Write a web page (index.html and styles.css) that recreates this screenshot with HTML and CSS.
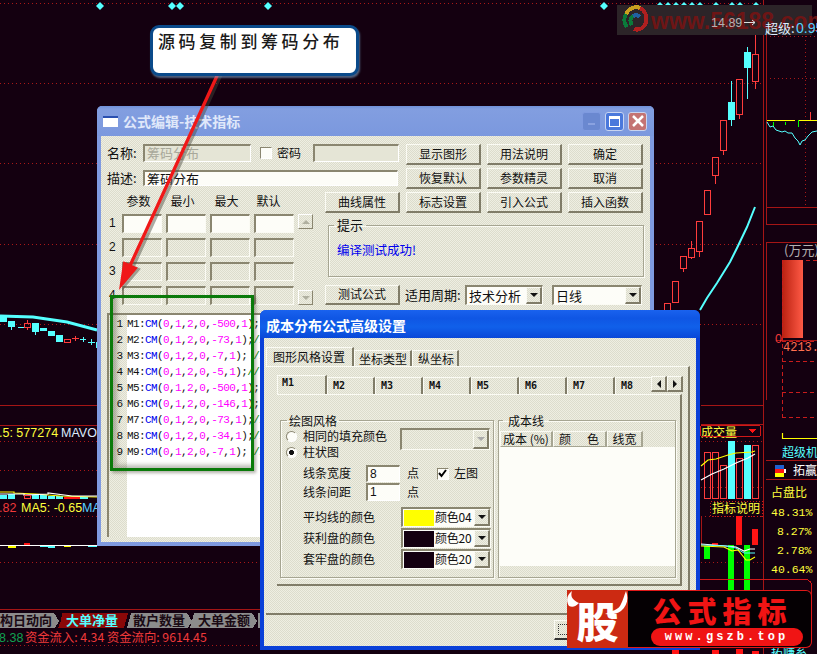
FILE: index.html
```html
<!DOCTYPE html>
<html lang="zh">
<head>
<meta charset="utf-8">
<title>成本分布公式高级设置</title>
<link rel="stylesheet" href="styles.css">
</head>
<body>
<main class="desktop">

<svg class="chart" width="817" height="654" viewBox="0 0 817 654" xmlns="http://www.w3.org/2000/svg">
  <!-- grid -->
  <g class="dot">
    <path d="M0 3.500H763M0 83.500H763M0 163.500H763M0 244.500H763M0 324.500H763M0 441.500H97M0 470.500H97M0 516.500H97M0 562.500H260M0 645.500H560"/>
    <path d="M766 36.500H817M766 78.500H817M805.500 36V205M701 441.500H763M701 516.500H763M701 487.500H763M701 562.500H763"/>
  </g>
  <g class="solid">
    <path d="M0 405.500H97M0 425.500H97M0 609.500H260M763.500 0V654M766.500 20V224M766 207.500H817M766 224.500H817M766 242.500H817M766.500 242V400M701 405.500H763M701 424.500H763M766 460.500H817M766 479.500H817M766 30.500H817M776 340.500H817"/>
  </g>
  <!-- diamonds -->
  <g class="gem">
    <path d="M100 2l4 4-4 4-4-4zM172 2l4 4-4 4-4-4zM180 2l4 4-4 4-4-4zM268 2l4 4-4 4-4-4zM604 2l4 4-4 4-4-4zM660 2l4 4-4 4-4-4zM668 2l4 4-4 4-4-4zM676 2l4 4-4 4-4-4zM684 2l4 4-4 4-4-4zM692 2l4 4-4 4-4-4zM700 2l4 4-4 4-4-4zM716 2l4 4-4 4-4-4zM732 2l4 4-4 4-4-4zM740 2l4 4-4 4-4-4zM756 2l4 4-4 4-4-4z"/>
  </g>
  <!-- candles main -->
  <g class="wick-dn"><path d="M747.500 47V99M731.500 81V126"/></g>
  <g class="wick-up"><path d="M755.500 23V54M755.500 81V89M739.500 115V119M723.500 151V155M715.500 176V184M699.500 251V257M691.500 241V248M691.500 257V259M683.500 269V272"/></g>
  <g class="up">
    <rect x="752.500" y="54.500" width="6" height="27"/>
    <rect x="736.500" y="79.500" width="6" height="35"/>
    <rect x="720.500" y="120.500" width="6" height="30"/>
    <rect x="712.500" y="157.500" width="6" height="18"/>
    <rect x="704.500" y="190.500" width="6" height="24"/>
    <rect x="696.500" y="221.500" width="6" height="30"/>
    <rect x="688.500" y="248.500" width="6" height="9"/>
    <rect x="680.500" y="256.500" width="6" height="12"/>
    <rect x="672.500" y="281.500" width="6" height="21"/>
    <rect x="664.500" y="303.500" width="6" height="12"/>
  </g>
  <g class="dn">
    <rect x="744" y="52" width="7" height="16"/>
    <rect x="728" y="102" width="7" height="18"/>
  </g>
  <polyline class="ma" points="755,207 747,227 737,248 730,262 717,283 707,298 700,310"/>

  <!-- candles left -->
  <polyline class="ma thick" points="0,316 33,317 67,322 97,330"/>
  <g class="dn">
    <rect x="0" y="315" width="7" height="7"/><rect x="8" y="321" width="7" height="6"/>
    <rect x="32" y="323" width="7" height="9"/><rect x="40" y="328" width="7" height="3"/>
    <rect x="48" y="331" width="7" height="5"/><rect x="56" y="335" width="7" height="7"/>
    <rect x="96" y="342" width="1" height="6"/>
  </g>
  <g class="wick-dn"><path d="M11.500 327V330M35.500 332V335M18 327.500H24M80 339.500H86M88 342.500H95M83 337V342M91 339V345"/></g>
  <g class="wick-up"><path d="M27.500 320V323M27.500 327V330M72 338.500H79M75.500 336V341"/></g>
  <g class="up"><rect x="24.500" y="323.500" width="6" height="4"/><rect x="64.500" y="339.500" width="6" height="3"/></g>

  <!-- volume rows left -->
  <g class="dn"><rect x="0" y="495" width="7" height="4"/><rect x="8" y="494" width="7" height="5"/><rect x="32" y="495" width="7" height="4"/><rect x="40" y="495" width="7" height="4"/><rect x="48" y="496" width="7" height="3"/><rect x="56" y="496" width="7" height="3"/><rect x="80" y="497" width="8" height="2"/></g>
  <rect class="fill-red" x="64" y="497" width="16" height="2"/>
  <polyline class="line-y" points="0,492 14,492 14,493 36,494 60,496 97,497"/>
  <polyline class="line-w" points="0,494 24,494 24,495 48,494 48,493 72,496 97,496"/>
  <g class="up"><rect x="24.500" y="495.500" width="6" height="3"/></g>
  <path class="line-w" d="M0 545.500H97"/>
  <rect class="fill-red" x="24" y="543" width="6" height="2"/>
  <rect class="fill-yel" x="8" y="546" width="8" height="2"/>
  <rect class="fill-yel" x="64" y="546" width="7" height="1"/>
  <rect class="fill-cy" x="40" y="546" width="8" height="1"/>
  <rect class="fill-cy" x="48" y="546" width="7" height="2"/>
  <rect class="fill-cy" x="88" y="546" width="9" height="1"/>

  <text class="t num yel" x="-1" y="437">.5: 577274</text>
  <text class="t num pale" x="61" y="437">MAVOL</text>
  <text class="t num red" x="-1" y="512">.82</text>
  <text class="t num yel" x="21" y="512">MA5: -0.65</text>
  <text class="t num cyan2" x="82" y="512">MA</text>

  <!-- bottom tabs -->
  <g class="tabs">
    <polygon class="tab" points="0,613 54,613 59,621 55,628 0,628"/>
    <polygon class="tab" points="131,613 187,613 192,621 188,628 127,628"/>
    <polygon class="tab" points="194,613 252,613 257,621 253,628 190,628"/>
    <polygon class="tab" points="258,613 262,613 262,628 258,628"/>
    <polygon class="tab on" points="62,613 128,613 124,628 58,628 61,621"/>
    <text class="tabt" x="0" y="625">构日动向</text>
    <text class="tabt cyan" x="66" y="625">大单净量</text>
    <text class="tabt" x="133" y="625">散户数量</text>
    <text class="tabt" x="198" y="625">大单金额</text>
  </g>
  <text class="t num green" x="-1" y="642">8.38</text>
  <text class="t cn status red" x="25" y="642">资金流入: 4.34 资金流向: 9614.45</text>

  <!-- top right panel -->
  <path class="line-y" d="M767 120.500H795M798 120.500H817"/>
  <path class="solid-br" d="M810.500 112V120"/>
  <path class="line-g" d="M773.500 122V127M785.500 122V125M798.500 120V127"/>
  <polyline class="thin-cy" points="767,122 770,127 773,126 776,130 779,131 782,132 785,131 788,133 792,133 795,138 798,141 800,145 802,141 805,140 808,136 812,132 817,131"/>
  <text class="t cn gray" x="784" y="255">(万元)</text>
  <defs>
    <linearGradient id="barfill" x1="0" x2="1" y1="0" y2="0">
      <stop offset="0" stop-color="#b82010"/><stop offset="1" stop-color="#ff5a46"/>
    </linearGradient>
  </defs>
  <rect x="782" y="260" width="21" height="78" fill="url(#barfill)"/>
  <path class="dash" d="M782.500 260V417M806 260.500H817M782 341.500H817M782 361.500H817M782 392.500H817M782 417.500H817"/>
  <text class="t num red" x="775" y="343">0</text>
  <text class="t mono sal" x="783" y="351">4213.8</text>
  <path class="line-y" d="M782.500 433V438.500H817"/>
  <text class="t cn cyan big" x="782" y="457">超级机</text>

  <!-- lower right indicators -->
  <text class="t cn yel big" x="701" y="437">成交量</text>
  <rect class="frame" x="700.500" y="425.500" width="60" height="11" rx="2"/>
  <polygon class="fill-red" points="749,429 756,429 752.500,433"/>
  <g class="up">
    <rect x="704.500" y="452.500" width="6" height="46"/>
    <rect x="712.500" y="452.500" width="6" height="46"/>
    <rect x="720.500" y="465.500" width="6" height="33"/>
    <rect x="736.500" y="458.500" width="6" height="40"/>
    <rect x="752.500" y="445.500" width="6" height="53"/>
  </g>
  <rect class="fill-cy" x="728" y="441" width="7" height="58"/>
  <rect class="fill-cy" x="744" y="445" width="7" height="54"/>
  <polyline class="line-y" points="701,466 708,460 716,459 728,455 736,453 752,452 755,451"/>
  <polyline class="line-w" points="701,480 712,474 724,469 736,463 748,458 755,454"/>
  <rect class="frame dotted" x="710.500" y="501.500" width="52" height="15"/>
  <text class="t cn yel big" x="712" y="513">指标说明</text>
  <path class="solid" d="M701.500 516V545"/>
  <rect class="fill-red" x="736" y="516" width="6" height="29"/>
  <rect class="fill-red" x="752" y="529" width="6" height="16"/>
  <rect class="fill-red" x="712" y="543" width="6" height="3"/>
  <rect class="fill-grn" x="704" y="546" width="6" height="13"/>
  <rect class="fill-grn" x="728" y="545" width="6" height="45"/>
  <rect class="fill-grn" x="744" y="545" width="6" height="45"/>
  <polyline class="line-w" points="701,544 726,546 736,547 744,551 750,549 755,549"/>
  <polyline class="thin-cy" points="701,545 726,546 736,548 744,553 750,553 755,553"/>
  <polyline class="line-y" points="701,546 724,547 732,551 738,550 746,560 750,560 755,557"/>
  <rect class="frame" x="662.500" y="579.500" width="149" height="40" rx="6"/>

  <!-- right info list -->
  <rect class="fill-blue" x="775" y="465" width="9" height="4"/>
  <rect class="fill-red" x="775" y="469" width="9" height="4"/>
  <rect class="fill-yel" x="775" y="473" width="9" height="4"/>
  <rect class="fill-white" x="784" y="469" width="2" height="4"/>
  <text class="t cn white big" x="793" y="475">拓赢</text>
  <text class="t cn yel big" x="771" y="497">占盘比</text>
  <text class="t mono yel pct" x="771" y="516">48.31% 起</text>
  <text class="t mono yel pct" x="777" y="535">8.27% 机</text>
  <text class="t mono yel pct" x="777" y="554">2.78% 中</text>
  <text class="t mono yel pct" x="771" y="573">40.64% 普</text>
  <g><rect class="fill-red" x="672" y="648" width="7" height="6"/><rect class="fill-red" x="712" y="650" width="7" height="4"/><rect class="fill-red" x="736" y="649" width="7" height="5"/><rect class="fill-red" x="752" y="651" width="7" height="3"/></g>
  <text class="t cn cyan big" x="771" y="657">拓赚系</text>

  <!-- watermark -->
  <rect class="wm" x="617" y="5" width="195" height="30"/>
  <g fill="none" stroke-width="4">
    <path d="M627 27a11 11 0 0 1-1-13" stroke="#0a7a3a"/>
    <path d="M626 14a11 11 0 0 1 14-6" stroke="#c8a020"/>
    <path d="M640 8a11 11 0 0 1 6 13 9 9 0 0 1-12 8" stroke="#b02020"/>
    <path d="M632 25a6 6 0 0 1 1-9" stroke="#0a7a3a"/>
    <path d="M633 16a6 6 0 0 1 7 1" stroke="#2060a0"/>
  </g>
  <text class="wmt" x="651" y="29">www.56188.com</text>
  <text class="t num gray" x="711" y="27">14.89</text>
  <path class="thin-w" d="M744 22.500H755M752 20l3 2.500-3 2.500"/>
  <text class="t cn pale" x="765" y="33">超级:</text>
  <text class="t num num-lg cyan2" x="796" y="33">0.95</text>
</svg>

<section class="win win-a">
  <header class="title-a">
    <span class="app-icon"></span>
    <h1 class="title-text">公式编辑-技术指标</h1>
    <span class="caption">
      <span class="cap cap-min"><i class="min-bar"></i></span>
      <span class="cap cap-max"><i class="max-box"></i></span>
      <span class="cap cap-close"><svg width="14" height="14" viewBox="0 0 14 14"><path d="M2 2l10 10M12 2L2 12" stroke="#fff" stroke-width="2.500" fill="none"/></svg></span>
    </span>
  </header>
  <div class="body-a">
    <div class="fields">
      <div class="f-row">
        <label class="lab">名称:</label>
        <span class="inp name off">筹码分布</span>
        <span class="chk"></span>
        <span class="pw">密码</span>
        <span class="inp pwbox off"></span>
      </div>
      <div class="f-row r2">
        <label class="lab">描述:</label>
        <span class="inp desc">筹码分布</span>
      </div>
    </div>

    <div class="btn-grid">
      <button class="btn">显示图形</button><button class="btn">用法说明</button><button class="btn">确定</button>
      <button class="btn">恢复默认</button><button class="btn">参数精灵</button><button class="btn">取消</button>
      <button class="btn">标志设置</button><button class="btn">引入公式</button><button class="btn">插入函数</button>
    </div>

    <div class="params">
      <div class="param-table">
        <span></span><span class="ph">参数</span><span class="ph">最小</span><span class="ph">最大</span><span class="ph">默认</span>
        <span class="pn">1</span><span class="cell on"></span><span class="cell on"></span><span class="cell on"></span><span class="cell on"></span>
        <span class="pn">2</span><span class="cell"></span><span class="cell"></span><span class="cell"></span><span class="cell"></span>
        <span class="pn">3</span><span class="cell"></span><span class="cell"></span><span class="cell"></span><span class="cell"></span>
        <span class="pn">4</span><span class="cell"></span><span class="cell"></span><span class="cell"></span><span class="cell"></span>
      </div>
      <div class="vscroll">
        <span class="sb-btn"><i class="tri up-tri"></i></span>
        <span class="sb-btn"><i class="tri down-tri"></i></span>
      </div>
    </div>

    <button class="btn curve">曲线属性</button>

    <fieldset class="hint">
      <legend class="hint-l">提示</legend>
      <p class="hint-t">编译测试成功!</p>
    </fieldset>

    <button class="btn test">测试公式</button>

    <div class="period">
      <span class="per-l">适用周期:</span>
      <span class="sel s1"><span class="sel-t">技术分析</span><span class="arrow"><i class="tri-b"></i></span></span>
      <span class="sel s2"><span class="sel-t">日线</span><span class="arrow"><i class="tri-b"></i></span></span>
    </div>

    <div class="editor">
      <div class="gutter">
        <span>1</span><span>2</span><span>3</span><span>4</span><span>5</span><span>6</span><span>7</span><span>8</span><span>9</span>
      </div>
      <pre class="code">M1:<b>CM</b>(<i>0</i>,<i>1</i>,<i>2</i>,<i>0</i>,<i>-500</i>,<i>1</i>);
M2:<b>CM</b>(<i>0</i>,<i>1</i>,<i>2</i>,<i>0</i>,<i>-73</i>,<i>1</i>);<u>//</u>
M3:<b>CM</b>(<i>0</i>,<i>1</i>,<i>2</i>,<i>0</i>,<i>-7</i>,<i>1</i>); <u>//</u>
M4:<b>CM</b>(<i>0</i>,<i>1</i>,<i>2</i>,<i>0</i>,<i>-5</i>,<i>1</i>);<u>//</u>
M5:<b>CM</b>(<i>0</i>,<i>1</i>,<i>2</i>,<i>0</i>,<i>-500</i>,<i>1</i>);
M6:<b>CM</b>(<i>0</i>,<i>1</i>,<i>2</i>,<i>0</i>,<i>-146</i>,<i>1</i>);
M7:<b>CM</b>(<i>0</i>,<i>1</i>,<i>2</i>,<i>0</i>,<i>-73</i>,<i>1</i>);<u>//</u>
M8:<b>CM</b>(<i>0</i>,<i>1</i>,<i>2</i>,<i>0</i>,<i>-34</i>,<i>1</i>);<u>//</u>
M9:<b>CM</b>(<i>0</i>,<i>1</i>,<i>2</i>,<i>0</i>,<i>-7</i>,<i>1</i>); <u>//</u></pre>
    </div>
  </div>
</section>

<div class="green-box"></div>

<section class="win win-b">
  <header class="title-b"><h2 class="title-text big-title">成本分布公式高级设置</h2></header>
  <div class="body-b">
    <nav class="tabs-top">
      <span class="tt active">图形风格设置</span>
      <span class="tt w58">坐标类型</span>
      <span class="tt w47">纵坐标</span>
    </nav>
    <div class="outer-panel">
      <nav class="tabs-m">
        <span class="mt active">M1</span>
        <span class="mt">M2</span><span class="mt">M3</span><span class="mt">M4</span><span class="mt">M5</span><span class="mt">M6</span><span class="mt">M7</span>
        <span class="mt last">M8</span>
        <span class="spin"><i class="tri-l"></i></span><span class="spin"><i class="tri-r"></i></span>
      </nav>
      <div class="inner-panel">
        <fieldset class="grp g1">
          <legend class="leg">绘图风格</legend>
          <div class="row-r first">
            <span class="radio"></span><span class="rl">相同的填充颜色</span>
            <span class="sel combo-off"><span class="arrow off-a"><i class="tri-g"></i></span></span>
          </div>
          <div class="row-r">
            <span class="radio sel-on"></span><span class="rl">柱状图</span>
          </div>
          <div class="row-n r-w">
            <span class="nl">线条宽度</span><span class="inp num-in">8</span><span class="unit">点</span>
            <span class="chk ck"><svg width="11" height="11" viewBox="0 0 11 11"><path d="M2 5l2.500 3L9 2" fill="none" stroke="#000" stroke-width="2"/></svg></span>
            <span class="left-l">左图</span>
          </div>
          <div class="row-n r-g">
            <span class="nl">线条间距</span><span class="inp num-in">1</span><span class="unit">点</span>
          </div>
          <div class="row-c rc1">
            <span class="cl">平均线的颜色</span>
            <span class="sel color"><i class="swatch yellow"></i><span class="ct">颜色04</span><span class="arrow"><i class="tri-b"></i></span></span>
          </div>
          <div class="row-c">
            <span class="cl">获利盘的颜色</span>
            <span class="sel color"><i class="swatch dark"></i><span class="ct">颜色20</span><span class="arrow"><i class="tri-b"></i></span></span>
          </div>
          <div class="row-c">
            <span class="cl">套牢盘的颜色</span>
            <span class="sel color"><i class="swatch dark"></i><span class="ct">颜色20</span><span class="arrow"><i class="tri-b"></i></span></span>
          </div>
        </fieldset>
        <fieldset class="grp g2">
          <legend class="leg l2">成本线</legend>
          <div class="list-head">
            <span class="lh w53">成本 (%)</span>
            <span class="lh w54"><span>颜</span><span>色</span></span>
            <span class="lh w36">线宽</span>
          </div>
          <div class="list-body"></div>
          <div class="list-foot"></div>
        </fieldset>
      </div>
    </div>
    <div class="ok-row"><button class="btn ok"><span class="focus"></span></button></div>
  </div>
</section>

<svg class="arrow-layer" width="817" height="654" viewBox="0 0 817 654" xmlns="http://www.w3.org/2000/svg">
  <polygon class="arrow-shadow" points="223.500,65.300 226.500,66.700 135.100,266.200 140.900,268.800 122,291 126.300,262.200 132.100,264.800"/>
  <polygon class="arrow-red" points="220.500,64.300 223.500,65.700 132.100,265.200 137.900,267.800 119,290 123.300,261.200 129.100,263.800"/>
</svg>

<aside class="callout">源码复制到筹码分布</aside>

<aside class="badge">
  <div class="badge-l">
    <svg class="horns" width="61" height="58" viewBox="0 0 61 58"><path d="M2 16C-2 9 1 4 5 1 3 7 6 10 12 13 9 16 6 18 2 16zM59 1c3 8 1 15-5 20-4 3-10 4-16 3 6-3 14-4 16-10 2-4 3-8 5-13z" fill="#fff"/></svg>
    <span class="gu">股</span>
  </div>
  <div class="badge-r">
    <strong class="b-title">公式指标</strong>
    <span class="pill">www.gszb.top</span>
  </div>
</aside>
</main>
</body>
</html>
```

FILE: styles.css
```css
* { box-sizing: border-box; }
html, body { margin: 0; padding: 0; background: #140010; overflow: hidden; }
body { width: 817px; height: 654px; font: 12px/1.2 "Noto Sans CJK SC", "Liberation Sans", sans-serif; color: #111; }
.desktop { position: relative; width: 817px; height: 654px; overflow: hidden; }

/* chart canvas */
.chart { position: absolute; left: 0; top: 0; shape-rendering: crispEdges; }
.dot path { fill: none; stroke: #a81818; stroke-dasharray: 1 3; }
.dash { fill: none; stroke: #c81c1c; stroke-dasharray: 4 3; }
.solid path, path.solid { fill: none; stroke: #a51515; }
.gem path { fill: #55ffff; shape-rendering: auto; }
.wick-dn path { stroke: #55ffff; fill: none; }
.wick-up path { stroke: #ff3c3c; fill: none; }
.up rect { fill: none; stroke: #ff3c3c; stroke-width: 1.500; }
.dn rect { fill: #55ffff; }
.ma { fill: none; stroke: #55ffff; stroke-width: 2; shape-rendering: auto; }
.ma.thick { stroke-width: 3; }
.line-y { fill: none; stroke: #ffff00; stroke-width: 1.200; shape-rendering: auto; }
.line-w { fill: none; stroke: #fff; stroke-width: 1.200; shape-rendering: auto; }
.line-g { fill: none; stroke: #00ff00; stroke-width: 1.500; }
.solid-br { fill: none; stroke: #ff3c3c; }
.thin-cy { fill: none; stroke: #55ffff; stroke-width: 1; shape-rendering: auto; }
.thin-w { fill: none; stroke: #ddd; stroke-width: 1; shape-rendering: auto; }
.fill-red { fill: #ff1414; }
.fill-yel { fill: #ffff00; }
.fill-cy { fill: #55ffff; }
.fill-grn { fill: #00ff00; }
.fill-blue { fill: #2060d0; }
.fill-white { fill: #fff; }
.frame { fill: none; stroke: #d01818; }
.frame.dotted { stroke-dasharray: 1 2; }
.tab { fill: #8c8c8c; }
.tab.on { fill: #8a0808; }
.tabt { font: 700 13px "Noto Sans CJK SC", sans-serif; fill: #1a0a14; shape-rendering: auto; }
.tabt.cyan { fill: #55ffff; }
.t { shape-rendering: auto; }
.num { font: 12.500px "Liberation Sans", sans-serif; }
.num-lg { font-size: 14px; }
.cn { font: 13px "Noto Sans CJK SC", sans-serif; }
.cn.big { font-size: 12px; }
.cn.status { font-size: 12.300px; }
.mono { font: 12px "Liberation Mono", "Noto Sans CJK SC", monospace; }
.pct { font-size: 11.500px; }
.yel { fill: #ffff3c; }
.red { fill: #f03a3a; }
.pale { fill: #dcecff; }
.cyan2 { fill: #58d0ff; }
.cyan { fill: #55ffff; }
.green { fill: #10a050; }
.gray { fill: #b4b0b0; }
.sal { fill: #ff7050; }
.white { fill: #fff; }
.wm { fill: #2c2428; }
.wmt { font: 700 23px "Liberation Sans", sans-serif; fill: #6e1515; shape-rendering: auto; }

/* dialogs */
.win { position: absolute; }
.title-text { margin: 0; font-size: 14px; font-weight: 700; line-height: 20px; }
.win-a {
  left: 97px; top: 106px; width: 557px; height: 440px;
  background: #7f9ae0; border-radius: 5px 5px 0 0; padding: 0 4px 4px;
  display: flex; flex-direction: column;
}
.title-a {
  height: 30px; display: flex; align-items: center;
  color: #e0e8fa;
  background: linear-gradient(#6f90d8 0, #829ee0 10%, #7b98de 100%);
  margin: 0 -4px; padding: 0 7px 0 6px; border-radius: 5px 5px 0 0;
}
.app-icon { width: 15px; height: 11px; background: #fff; border-top: 2px solid #2a50b0; margin-right: 5px; }
.caption { margin-left: auto; display: flex; gap: 4px; }
.cap { width: 19px; height: 19px; border-radius: 3px; border: 1px solid #c8d4f0; display: flex; align-items: center; justify-content: center; }
.cap-min { background: #6a88d0; border-color: #7f9ae0; }
.min-bar { width: 7px; height: 2px; background: #8aa2e0; margin-top: 5px; }
.cap-max { background: #4a78dc; }
.max-box { width: 11px; height: 11px; border: 1px solid #fff; border-top-width: 3px; }
.cap-close { background: #c47474; }

.body-a, .body-b, .btn, .off, .cell, .vscroll, .sb-btn, .sel.combo-off, .list-foot, .arrow, .lh, .gutter {
  background-color: #e5e5d6;
  background-image: repeating-conic-gradient(#eeeee2 0 25%, #dcdccc 0 50%);
  background-size: 2px 2px;
}

.body-a {
  flex: 1; min-height: 0; padding: 8px 6px 0;
  display: grid;
  grid-template-columns: 218px 75px 6px 238px;
  grid-template-rows: 48px 21px 72px 20px 224px;
  grid-template-areas:
    "fields fields . btns"
    "params curve  . btns"
    "params hint   hint hint"
    "params test   . period"
    "editor editor editor editor";
  overflow: hidden;
}
.fields { grid-area: fields; display: flex; flex-direction: column; gap: 8px; }
.f-row { display: flex; align-items: center; height: 18px; }
.f-row.r2 { height: 16px; }
.lab { width: 36px; font-size: 13px; flex: none; }
.inp {
  display: block; height: 100%; padding: 0 2px; font-size: 13px; line-height: 14px; background: #fdfdf8;
  border-style: solid; border-width: 2px 1px 1px 2px; border-color: #8a8670 #fff #fff #8a8670; white-space: nowrap; overflow: hidden;
}
.inp.off { background-color: #e5e5d6; color: #a8a89a; }
.name { width: 108px; }
.pwbox { width: 86px; margin-left: 12px; }
.desc { width: 255px; color: #111; }
.chk {
  width: 12px; height: 12px; margin-left: 9px; background: #fdfdf8; flex: none;
  border-style: solid; border-width: 1px; border-color: #8a8670 #fff #fff #8a8670; display: block;
}
.pw { margin-left: 5px; width: 24px; font-size: 12px; }

.btn-grid { grid-area: btns; display: grid; grid-template-columns: 75px 75px 75px; grid-auto-rows: 21px; column-gap: 6px; row-gap: 3px; align-content: start; }
.btn {
  padding: 0 0 2px; margin: 0; font: 12px/15px "Noto Sans CJK SC", sans-serif; color: #111; border-radius: 0;
  border-style: solid; border-width: 1px 2px 2px 1px; border-color: #fbfbf4 #807c68 #807c68 #fbfbf4;
}
.curve { grid-area: curve; }
.test { grid-area: test; }

.params { grid-area: params; display: flex; padding-top: 2px; align-items: flex-end; height: 113px; }
.param-table { display: grid; grid-template-columns: 15px 44px 44px 44px 40px; grid-template-rows: 16px 19px 19px 19px 19px; row-gap: 5px; }
.ph { text-align: center; font-size: 12px; line-height: 16px; padding-right: 11px; white-space: nowrap; }
.pn { font: 12px/19px "Liberation Sans", sans-serif; padding-left: 2px; }
.cell {
  width: 40px; height: 19px; display: block;
  border-style: solid; border-width: 2px 1px 1px 2px; border-color: #8a8670 #fbfbf4 #fbfbf4 #8a8670;
}
.cell.on { background: #fdfdf8; }
.vscroll { width: 15px; height: 91px; margin-left: 4px; display: flex; flex-direction: column; justify-content: space-between; }
.sb-btn { width: 15px; height: 15px; display: flex; align-items: center; justify-content: center; border-style: solid; border-width: 1px; border-color: #fff #8a8670 #8a8670 #fff; }
.tri { width: 0; height: 0; border: 4px solid transparent; }
.up-tri { border-top: 0; border-bottom: 4px solid #b0b0a0; }
.down-tri { border-bottom: 0; border-top: 4px solid #b0b0a0; }

.hint {
  grid-area: hint; margin: 5px 0 8px 3px; padding: 0 8px; min-width: 0;
  border: 1px solid #a6a592; box-shadow: inset 1px 1px 0 #fbfbf4, 1px 1px 0 #fbfbf4;
}
.hint-l { padding: 0 3px; margin-left: -3px; font-size: 13px; line-height: 14px; }
.hint-t { margin: 10px 0 0; color: #0000ee; font-size: 12.500px; line-height: 16px; font-weight: 400; }

.period { grid-area: period; display: flex; align-items: center; margin-left: -1px; }
.per-l { width: 60px; font-size: 13px; white-space: nowrap; }
.sel {
  display: flex; align-items: center; height: 20px; background: #fdfdf8;
  border-style: solid; border-width: 2px 1px 1px 2px; border-color: #8a8670 #fbfbf4 #fbfbf4 #8a8670; font-size: 13px;
}
.s1 { width: 78px; }
.s2 { width: 90px; margin-left: 9px; }
.sel-t { flex: 1; padding-left: 2px; line-height: 16px; }
.arrow {
  margin-left: auto; width: 16px; height: 100%; flex: none; display: flex; align-items: center; justify-content: center;
  border-style: solid; border-width: 1px 2px 2px 1px; border-color: #fbfbf4 #807c68 #807c68 #fbfbf4;
}
.tri-b { width: 0; height: 0; border: 4px solid transparent; border-bottom: 0; border-top: 4px solid #111; }
.tri-g { width: 0; height: 0; border: 4px solid transparent; border-bottom: 0; border-top: 4px solid #aaa; }

.editor { grid-area: editor; margin-top: 8px; display: flex; height: 224px; border-style: solid; border-width: 2px 0 0 2px; border-color: #8a8670; }
.gutter { width: 18px; flex: none; display: flex; flex-direction: column; padding: 1px 4px 0 0; font: 11px/16px "Liberation Mono", monospace; text-align: right; }
.gutter span { display: block; height: 16px; }
.code {
  margin: 0; flex: 1; padding: 1px 0 0 0; background: #fff; color: #111; overflow: hidden;
  font: 11px/16px "Liberation Mono", monospace; letter-spacing: -.6px;
}
.code b { font-weight: 400; color: #0000ee; }
.code i { font-style: normal; color: #ff00ff; }
.code u { text-decoration: none; color: #0a8a0a; }

.green-box {
  position: absolute; left: 110px; top: 295px; width: 144px; height: 176px;
  border: 3px solid #0a7a0a;
  box-shadow: inset 4px -3px 4px rgba(60, 60, 40, .35), 2px 2px 3px rgba(60, 60, 40, .4);
}

.win-b {
  left: 260px; top: 310px; width: 440px; height: 340px;
  background: #0a40d8; border-radius: 6px 6px 0 0; padding: 0 4px 4px;
  display: flex; flex-direction: column;
}
.title-b {
  margin: 0 -4px; height: 28px; padding: 2px 6px 0; color: #fff; border-radius: 6px 6px 0 0;
  background: linear-gradient(#1a62ee 0, #0f56e4 30%, #1060ea 60%, #0a48d8 100%);
}
.big-title { line-height: 26px; }
.body-b { flex: 1; padding: 10px 6px 0 2px; display: flex; flex-direction: column; min-height: 0; overflow: hidden; }
.tabs-top { display: flex; height: 18px; align-items: flex-end; }
.tt {
  height: 16px; padding: 0 0 0 6px; font-size: 12px; line-height: 16px; width: 88px; white-space: nowrap;
  border-right: 2px solid #807c68; border-left: 1px solid #fbfbf4; border-top: 1px solid #fbfbf4;
}
.tt.active { height: 19px; line-height: 17px; }
.w58 { width: 58px; padding-left: 4px; }
.w47 { width: 47px; padding-left: 5px; }
.outer-panel {
  height: 249px; width: 424px; padding: 9px 0 0 11px;
  border-style: solid; border-width: 1px 2px 2px 0; border-color: #fbfbf4 #807c68 #807c68 #fbfbf4;
}
.tabs-m { display: flex; height: 18px; align-items: flex-end; width: 406px; }
.mt {
  width: 48px; height: 17px; padding-left: 5px; font: 700 10px/15px "DejaVu Sans Mono", monospace;
  border-right: 2px solid #807c68; border-left: 1px solid #fbfbf4; border-top: 1px solid #fbfbf4;
}
.mt.active { width: 50px; height: 19px; padding-left: 4px; line-height: 13px; }
.mt.last { width: 36px; border-right: 0; }
.spin {
  width: 16px; height: 16px; align-self: flex-start; flex: none; display: flex; align-items: center; justify-content: center;
  border-style: solid; border-width: 1px 2px 2px 1px; border-color: #fbfbf4 #807c68 #807c68 #fbfbf4;
}
.tri-l { width: 0; height: 0; border: 4px solid transparent; border-left: 0; border-right: 4px solid #111; }
.tri-r { width: 0; height: 0; border: 4px solid transparent; border-right: 0; border-left: 4px solid #111; }
.inner-panel {
  width: 405px; height: 192px; padding: 18px 0 0 3px; display: flex; gap: 4px;
  border-style: solid; border-width: 0 2px 2px 0; border-color: #807c68; border-top: 1px solid #fbfbf4;
}
.grp {
  margin: 0; padding: 0; min-width: 0; height: 165px;
  border: 1px solid #a6a592; box-shadow: inset 1px 1px 0 #fbfbf4, 1px 1px 0 #fbfbf4;
}
.g1 { width: 214px; padding-left: 5px; }
.g2 { width: 178px; padding-left: 1px; }
.leg { padding: 0 2px; margin-left: 1px; font-size: 12px; line-height: 15px; height: 15px; }
.l2 { padding: 0 5px; margin-left: 3px; }
.row-r { display: flex; align-items: center; height: 17px; }
.row-r.first { height: 16px; }
.radio { width: 11px; height: 11px; border-radius: 50%; background: #fdfdf8; flex: none; border: 1px solid #8a8670; border-bottom-color: #fff; border-right-color: #fff; }
.radio.sel-on { background: radial-gradient(circle, #111 0 2.200px, #fdfdf8 2.800px); }
.rl { margin-left: 6px; width: 97px; white-space: nowrap; }
.combo-off { width: 90px; height: 22px; flex: none; margin-top: 5px; justify-content: flex-end; }
.row-n { display: flex; align-items: center; height: 17px; }
.r-w { margin-top: 4px; }
.r-g { margin-top: 1px; height: 18px; }
.nl { width: 63px; margin-left: 17px; white-space: nowrap; }
.num-in { width: 34px; height: 100%; font: 12px/14px "Liberation Sans", sans-serif; padding-left: 2px; }
.unit { margin-left: 7px; width: 12px; }
.ck { margin-left: 18px; padding: 0; }
.ck svg { display: block; margin: -1px 0 0 -1px; }
.left-l { margin-left: 5px; }
.row-c { display: flex; align-items: center; height: 20px; margin-top: 1px; }
.rc1 { margin-top: 6px; }
.cl { width: 98px; margin-left: 17px; white-space: nowrap; }
.color { width: 90px; height: 20px; padding-left: 1px; }
.swatch { width: 30px; height: 16px; flex: none; display: block; }
.yellow { background: #ffff00; }
.dark { background: #140010; }
.ct { margin-left: 1px; white-space: nowrap; font-size: 12px; letter-spacing: -.2px; }
.list-head { display: flex; height: 16px; margin-top: 3px; }
.lh { height: 16px; line-height: 14px; text-align: center; display: flex; justify-content: center; border-style: solid; border-width: 1px 2px 1px 1px; border-color: #fbfbf4 #a6a592 #a6a592 #fbfbf4; white-space: nowrap; }
.w53 { width: 53px; }
.w54 { width: 54px; justify-content: space-between; padding: 0 6px 0 5px; }
.w36 { width: 36px; }
.list-body { height: 119px; background: #fdfdf8; }
.list-foot { height: 10px; }
.ok-row { margin-top: 5px; padding-left: 288px; }
.ok { display: flex; width: 70px; height: 20px; padding: 3px; border-color: #fbfbf4 #333 #333 #fbfbf4; }
.focus { display: block; flex: 1; border: 1px dotted #333; }

/* overlays */
.arrow-layer { position: absolute; left: 0; top: 0; pointer-events: none; }
.arrow-red { fill: #f01818; }
.arrow-shadow { fill: rgba(70, 70, 60, .45); }
.callout {
  position: absolute; left: 150px; top: 25px; width: 209px; height: 51px; padding: 1px 0 0 5px;
  background: #fff; border: 3px solid #0a4a8a; border-radius: 9px;
  box-shadow: 1px 2px 2px rgba(120, 160, 200, .6);
  font: 500 17px/24px "Noto Sans CJK SC", sans-serif; letter-spacing: 3.600px; color: #1a1a1a; white-space: nowrap;
}
.badge {
  position: absolute; left: 567px; top: 590px; width: 245px; height: 58px; display: flex;
}
.badge-l { width: 61px; background: #cc2a12; position: relative; display: flex; align-items: center; justify-content: center; overflow: hidden; }
.horns { position: absolute; left: 0; top: 0; }
.gu { font: 900 42px/1 "Noto Sans CJK SC", sans-serif; color: #fff; position: relative; top: 1px; }
.badge-r {
  flex: 1; background: #050003; border: 1px solid #e01818; border-left: 0; border-radius: 0 6px 6px 0;
  display: flex; flex-direction: column; align-items: center; padding-top: 2px;
}
.b-title { font: 900 29px/34px "Noto Sans CJK SC", sans-serif; color: #f01414; letter-spacing: 6px; margin-left: 6px; }
.pill {
  width: 152px; height: 18px; margin: 1px 0 0 14px; border-radius: 9px; background: #f01414; color: #fff;
  font: 700 12px/18px "Liberation Mono", monospace; letter-spacing: 3.100px; text-align: center;
}
```
